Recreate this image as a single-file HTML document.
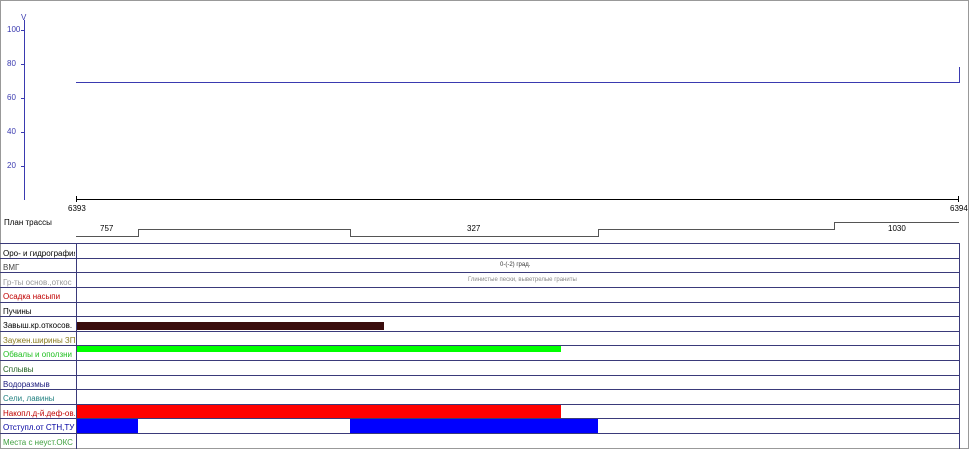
<html><head><style>
body{margin:0;width:969px;height:449px;background:#fff;position:relative;overflow:hidden;font-family:"Liberation Sans",sans-serif}
.t{position:absolute;font-size:8px;white-space:nowrap}
.l{position:absolute;left:3px;font-size:8px;white-space:nowrap;width:72px;overflow:hidden}
</style></head><body>
<svg width="969" height="449" style="position:absolute;left:0;top:0">
<rect x="0.5" y="0.5" width="968" height="448" fill="none" stroke="#999"/>
<g stroke="#3a3ab0" stroke-width="1">
<line x1="24.5" y1="20" x2="24.5" y2="200"/>
<line x1="21" y1="30.5" x2="25" y2="30.5"/><line x1="21" y1="64.5" x2="25" y2="64.5"/><line x1="21" y1="98.5" x2="25" y2="98.5"/><line x1="21" y1="132.5" x2="25" y2="132.5"/><line x1="21" y1="166.5" x2="25" y2="166.5"/>
<polyline points="76,82.5 959.5,82.5 959.5,67" fill="none"/>
</g>
<line x1="76" y1="199.5" x2="959" y2="199.5" stroke="#000"/>
<line x1="76.5" y1="196" x2="76.5" y2="202" stroke="#000"/><line x1="958.5" y1="196" x2="958.5" y2="202" stroke="#000"/>
<polyline points="76,236.5 138.5,236.5 138.5,229.5 350.5,229.5 350.5,236.5 598.5,236.5 598.5,229.5 834.5,229.5 834.5,222.5 959,222.5" fill="none" stroke="#555"/>
<rect x="76" y="322" width="308" height="8" fill="#3a0d0d"/>
<rect x="76" y="345" width="485" height="7" fill="#00ff00"/>
<rect x="76" y="404" width="485" height="14" fill="#ff0000"/>
<rect x="76" y="419" width="62" height="14" fill="#0000ff"/>
<rect x="350" y="419" width="248" height="14" fill="#0000ff"/>
<g stroke="#3a3a7a" stroke-width="1">
<line x1="0" y1="243.5" x2="959" y2="243.5"/>
<line x1="0" y1="258.5" x2="959" y2="258.5"/><line x1="0" y1="272.5" x2="959" y2="272.5"/><line x1="0" y1="287.5" x2="959" y2="287.5"/><line x1="0" y1="302.5" x2="959" y2="302.5"/><line x1="0" y1="316.5" x2="959" y2="316.5"/><line x1="0" y1="331.5" x2="959" y2="331.5"/><line x1="0" y1="345.5" x2="959" y2="345.5"/><line x1="0" y1="360.5" x2="959" y2="360.5"/><line x1="0" y1="375.5" x2="959" y2="375.5"/><line x1="0" y1="389.5" x2="959" y2="389.5"/><line x1="0" y1="404.5" x2="959" y2="404.5"/><line x1="0" y1="418.5" x2="959" y2="418.5"/><line x1="0" y1="433.5" x2="959" y2="433.5"/>
<line x1="76.5" y1="243" x2="76.5" y2="449"/><line x1="959.5" y1="243" x2="959.5" y2="449"/>
</g>
</svg>
<div class="t" style="left:21px;top:13px;color:#3a3ab0">V</div>
<div class="t" style="left:7px;top:25px;color:#3a3ab0">100</div>
<div class="t" style="left:7px;top:59px;color:#3a3ab0">80</div>
<div class="t" style="left:7px;top:93px;color:#3a3ab0">60</div>
<div class="t" style="left:7px;top:127px;color:#3a3ab0">40</div>
<div class="t" style="left:7px;top:161px;color:#3a3ab0">20</div>
<div class="t" style="left:68px;top:204px">6393</div>
<div class="t" style="left:950px;top:204px">6394</div>
<div class="t" style="left:4px;top:218px">План трассы</div>
<div class="t" style="left:100px;top:224px">757</div>
<div class="t" style="left:467px;top:224px">327</div>
<div class="t" style="left:888px;top:224px">1030</div>
<div class="t" style="left:500px;top:262px;font-size:6px;color:#333">0-(-2) град.</div>
<div class="t" style="left:468px;top:277px;font-size:6px;color:#888">Глинистые пески, выветрелые граниты</div>
<div class="l" style="top:249px;color:#000">Оро- и гидрография</div>
<div class="l" style="top:263px;color:#444">ВМГ</div>
<div class="l" style="top:278px;color:#999">Гр-ты основ.,откос</div>
<div class="l" style="top:292px;color:#c00000">Осадка насыпи</div>
<div class="l" style="top:307px;color:#000">Пучины</div>
<div class="l" style="top:321px;color:#000">Завыш.кр.откосов.</div>
<div class="l" style="top:336px;color:#8a7a20">Заужен.ширины ЗП</div>
<div class="l" style="top:350px;color:#20c020">Обвалы и оползни</div>
<div class="l" style="top:365px;color:#206020">Сплывы</div>
<div class="l" style="top:380px;color:#202080">Водоразмыв</div>
<div class="l" style="top:394px;color:#208080">Сели, лавины</div>
<div class="l" style="top:409px;color:#c00000">Накопл.д-й.деф-ов.</div>
<div class="l" style="top:423px;color:#0000a0">Отступл.от СТН,ТУ</div>
<div class="l" style="top:438px;color:#40a040">Места с неуст.ОКС</div>
</body></html>
